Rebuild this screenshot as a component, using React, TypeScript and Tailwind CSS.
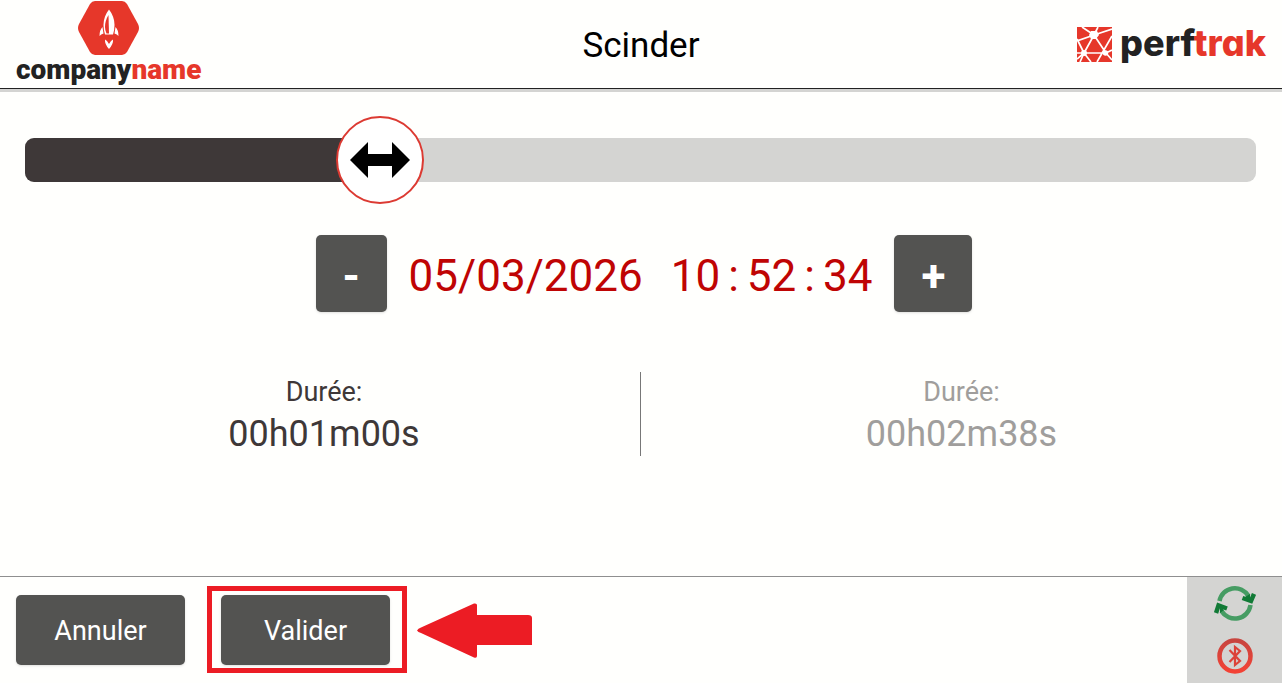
import { useState } from "react";

const POSITION_MAX = 1000;

export default function App() {
  const [position, setPosition] = useState(272);

  return (
    <div className="flex min-h-screen flex-col bg-[#fffffd] font-[Roboto,sans-serif] text-[#3e3838]">
      <header className="grid h-[92px] shrink-0 grid-cols-3 border-b-[3px] border-[#d4d4d2]">
        <div className="flex items-start border-b border-[#222] pl-4">
          <CompanyLogo />
        </div>
        <div className="flex items-center justify-center border-b border-[#222] pt-1">
          <h1 className="text-[35px] leading-10 text-black">Scinder</h1>
        </div>
        <div className="flex items-center justify-end border-b border-[#222] pr-4">
          <PerftrakLogo />
        </div>
      </header>

      <main className="flex-1 pt-6">
        <SplitSlider value={position} onChange={setPosition} />

        <div className="mt-[31px] flex items-center justify-center pl-[6px]">
          <button
            aria-label="Reculer"
            onClick={() => setPosition((p) => Math.max(0, p - 5))}
            className="h-[77px] w-[71px] rounded-[5px] bg-[#535351] pt-1 text-[44px] font-bold text-white shadow-sm"
          >
            -
          </button>
          <div className="flex items-center gap-7 px-[22px] pt-1 text-[44px] leading-[52px] text-[#bf0404]">
            <span>05/03/2026</span>
            <span className="flex gap-2">
              <span>10</span>
              <span>:</span>
              <span>52</span>
              <span>:</span>
              <span>34</span>
            </span>
          </div>
          <button
            aria-label="Avancer"
            onClick={() => setPosition((p) => Math.min(POSITION_MAX, p + 5))}
            className="h-[77px] w-[78px] rounded-[5px] bg-[#535351] pt-1 text-[44px] font-bold text-white shadow-sm"
          >
            +
          </button>
        </div>

        <div className="mt-[60px] grid grid-cols-2">
          <div className="border-r border-[#777] pl-2">
            <Duration value="00h01m00s" />
          </div>
          <div className="text-[#a09e9c]">
            <Duration value="00h02m38s" />
          </div>
        </div>
      </main>

      <footer className="flex h-[107px] shrink-0 border-t border-[#8f8f8f]">
        <div className="flex flex-1 items-start pt-[9px] pl-4">
          <button className="mt-[9px] h-[70px] w-[169px] rounded-[5px] bg-[#535351] pt-[2px] text-[27px] text-white shadow-sm">
            Annuler
          </button>
          <div className="ml-[22px] border-5 border-[#ec1c24] pt-1 pr-3 pb-[3px] pl-[9px]">
            <button className="block h-[70px] w-[169px] rounded-[5px] bg-[#535351] pt-[2px] text-[27px] text-white shadow-sm">
              Valider
            </button>
          </div>
          <svg className="mt-[17px] ml-[10px]" width="115" height="55" viewBox="0 0 115 55" aria-hidden="true">
            <path d="M0 27.500Q1 25.500 4 24.500L57 0.500Q60 0 60 2V12H111Q115 12 115 15V42H60V53Q60 55.500 57 54.500L4 30Q1 29 0 27.500Z" fill="#ec1c24" />
          </svg>
        </div>
        <div className="flex w-[95px] flex-col items-center gap-4 bg-[#d4d4d2] pt-2">
          <SyncIcon />
          <BluetoothIcon />
        </div>
      </footer>
    </div>
  );
}

function SplitSlider({ value, onChange }: { value: number; onChange: (v: number) => void }) {
  const ratio = value / POSITION_MAX;

  return (
    <div className="relative mr-[26px] ml-[25px] flex h-[88px] items-center">
      <div className="h-11 w-full overflow-hidden rounded-[9px] bg-[#d4d4d2]">
        <div
          className="h-full bg-[#3e3838]"
          style={{ width: `calc(44px + (100% - 88px) * ${ratio})` }}
        />
      </div>
      {/* poignée */}
      <div
        className="absolute top-0 size-[88px] rounded-full border-2 border-[#dc3a32] bg-white"
        style={{ left: `calc((100% - 88px) * ${ratio})` }}
      >
        <svg className="size-full" viewBox="0 0 84 84" aria-hidden="true">
          <path d="M12 42L30 24V36H54V24L72 42L54 60V48H30V60Z" fill="#000" />
        </svg>
      </div>
      <input
        type="range"
        min={0}
        max={POSITION_MAX}
        value={value}
        onChange={(e) => onChange(Number(e.target.value))}
        aria-label="Point de division"
        className="absolute inset-0 size-full cursor-pointer opacity-0"
      />
    </div>
  );
}

function Duration({ value }: { value: string }) {
  return (
    <div className="flex h-[84px] flex-col items-center pt-1">
      <span className="text-[27px] leading-8">Durée:</span>
      <span className="mt-1 text-[36px] leading-[44px]">{value}</span>
    </div>
  );
}

function CompanyLogo() {
  return (
    <div className="flex flex-col items-center">
      <svg className="mt-px" width="62" height="54" viewBox="0 0 62 54" aria-hidden="true">
        <path d="M17 0H44Q47 0 49 3L60 23Q62 27 60 31L49 51Q47 54 44 54H17Q14 54 12 51L1 31Q-1 27 1 23L12 3Q14 0 17 0Z" fill="#e6372a" />
        <path d="M31 8.500C27.500 13 25.500 18 25.500 24Q25.500 29.500 27 33.500H35Q36.500 29.500 36.500 24C36.500 18 34.500 13 31 8.500Z" fill="#fff" />
        <path d="M30.500 14C28 18 27 22 27 26Q27 29.500 28.500 32.500H31Z" fill="#e6372a" />
        <path d="M24.500 26Q21.500 29 21.500 35Q23 33 25.500 32.500ZM37.500 26Q40.500 29 40.500 35Q39 33 36.500 32.500Z" fill="#fff" />
        <path d="M27 38.500Q29 39 31 43Q33 39 35 38.500Q35.500 43 31 48Q26.500 43 27 38.500Z" fill="#fff" />
      </svg>
      <span className="text-[28px] leading-[30px] font-black text-[#222]">
        company<span className="text-[#e6372a]">name</span>
      </span>
    </div>
  );
}

function PerftrakLogo() {
  return (
    <div className="flex items-center gap-2">
      <svg width="35" height="35" viewBox="0 0 35 35" aria-hidden="true">
        <path d="M0 0H35V35H0Z" fill="#e6372a" />
        <path
          d="M17 8L5 0M17 8L21 0M17 8L35 2M17 8L0 14M17 8L7 26M17 8L29 26M0 12L7 26M0 26H29L35 23M35 9L20 35M7 26L0 32M7 26L3 35M7 26L14 35M29 26L35 33"
          stroke="#fff"
          strokeWidth="1.700"
          fill="none"
        />
        <path d="M14 4L20 4L22 8L19 12H14L12 8Z" fill="#fff" />
        <circle cx="7" cy="26" r="3" fill="#fff" />
        <circle cx="28.500" cy="26" r="2.700" fill="#fff" />
      </svg>
      <span className="pb-[2px] font-[Inter,sans-serif] text-[36px] leading-10 font-extrabold text-[#222] [font-feature-settings:'cv11']">
        perf<span className="text-[#e6372a]">trak</span>
      </span>
    </div>
  );
}

function SyncIcon() {
  return (
    <svg width="42" height="37" viewBox="0 0 42 37" role="img" aria-label="Synchronisation">
      <path d="M5.500 16A15.700 15.700 0 0 1 34.500 11M36.500 20A15.700 15.700 0 0 1 7.500 26" fill="none" stroke="#469c63" strokeWidth="4.500" />
      <path d="M28.500 13L37 16L40 9M13 23.500L4.500 20.500L2 28" fill="none" stroke="#117a36" strokeWidth="4.500" />
      <path d="M31 12L36 9L36 15ZM10 25L6 28L6 22Z" fill="#117a36" />
    </svg>
  );
}

function BluetoothIcon() {
  return (
    <svg width="36" height="36" viewBox="0 0 36 36" role="img" aria-label="Bluetooth">
      <defs>
        <linearGradient id="bt" x1="0" y1="0" x2="0" y2="1">
          <stop offset="0" stopColor="#c8453f" />
          <stop offset="1" stopColor="#f34235" />
        </linearGradient>
      </defs>
      <circle cx="18" cy="18" r="15.500" fill="none" stroke="url(#bt)" strokeWidth="4.500" />
      <path d="M12.500 12L23 23L18 27V9L23 13L12.500 24" fill="none" stroke="#dc4238" strokeWidth="2.200" />
    </svg>
  );
}
